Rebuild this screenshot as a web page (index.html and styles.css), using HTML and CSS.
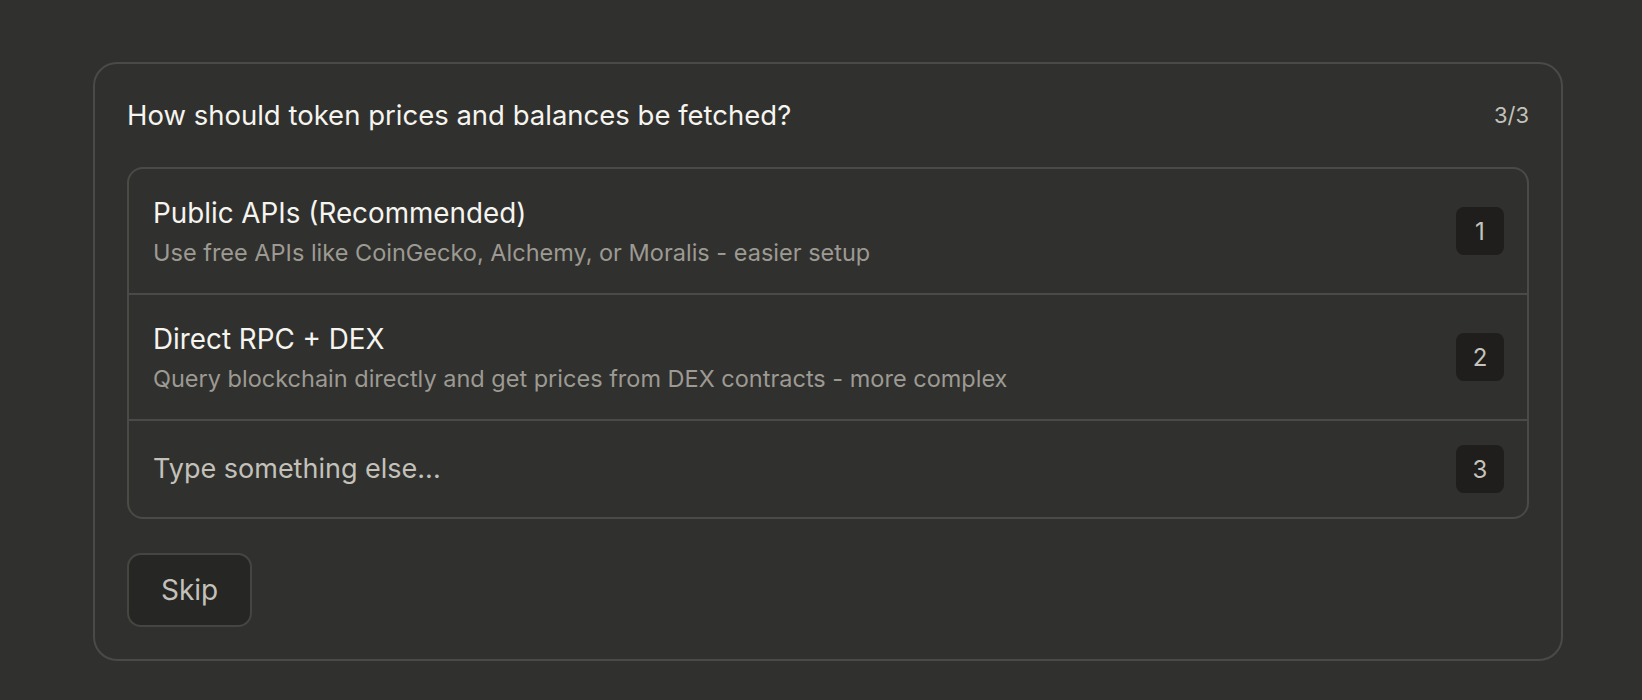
FILE: index.html
```html
<!DOCTYPE html>
<html lang="en">
<head>
<meta charset="utf-8">
<title>Question</title>
<link rel="stylesheet" href="styles.css">
</head>
<body>
<div class="page">
  <section class="card">
    <header class="card-head">
      <h1 class="question">How should token prices and balances be fetched?</h1>
      <span class="counter">3/3</span>
    </header>
    <div class="options">
      <div class="option">
        <div class="option-text">
          <div class="option-title">Public APIs (Recommended)</div>
          <div class="option-desc">Use free APIs like CoinGecko, Alchemy, or Moralis - easier setup</div>
        </div>
        <span class="key">1</span>
      </div>
      <div class="option">
        <div class="option-text">
          <div class="option-title">Direct RPC + DEX</div>
          <div class="option-desc">Query blockchain directly and get prices from DEX contracts - more complex</div>
        </div>
        <span class="key">2</span>
      </div>
      <div class="option option-input">
        <div class="option-placeholder">Type something else...</div>
        <span class="key">3</span>
      </div>
    </div>
    <button class="skip" type="button">Skip</button>
  </section>
</div>
</body>
</html>
```

FILE: styles.css
```css
* { box-sizing: border-box; }

html, body {
  margin: 0;
  padding: 0;
  background: #30302e;
}

body {
  font-family: "Inter", "Noto Sans", "Liberation Sans", sans-serif;
  color: #f5f4ef;
  height: 700px;
  overflow: hidden;
}

.page {
  padding: 62px 79px 0 93px;
}

.card {
  border: 2px solid #4a4a47;
  border-radius: 24px;
  padding: 32px;
  display: flex;
  flex-direction: column;
  align-items: flex-start;
}

.card-head {
  width: 100%;
  height: 38px;
  display: flex;
  align-items: center;
  justify-content: space-between;
  margin-bottom: 33px;
}

.question {
  margin: 0;
  font-size: 27.5px;
  font-weight: 400;
  line-height: 38px;
  color: #f5f4ef;
}

.counter {
  font-size: 22px;
  color: #c3c1b9;
  line-height: 38px;
}

.options {
  width: 100%;
  border: 2px solid #4a4a47;
  border-radius: 16px;
  display: flex;
  flex-direction: column;
}

.option {
  display: flex;
  align-items: center;
  justify-content: space-between;
  padding: 24px 23px 24px 24px;
}

.option + .option {
  border-top: 2px solid #4a4a47;
}

.option-title {
  font-size: 27.8px;
  line-height: 40px;
  color: #f5f4ef;
}

.option-desc {
  font-size: 23.5px;
  line-height: 33px;
  padding-top: 3px;
  color: #9c9a92;
}

.option-placeholder {
  font-size: 27px;
  line-height: 40px;
  color: #c3c1b9;
}

.key {
  width: 48px;
  height: 48px;
  flex: none;
  border-radius: 8px;
  background: #1f1e1d;
  color: #c5c3bb;
  font-size: 24px;
  display: flex;
  align-items: center;
  justify-content: center;
}

.skip {
  margin-top: 34px;
  height: 74px;
  padding: 0 32px;
  border: 2px solid #454542;
  border-radius: 14px;
  background: #262624;
  color: #c3c1b9;
  font-family: inherit;
  font-size: 28px;
  line-height: 1;
}
```
